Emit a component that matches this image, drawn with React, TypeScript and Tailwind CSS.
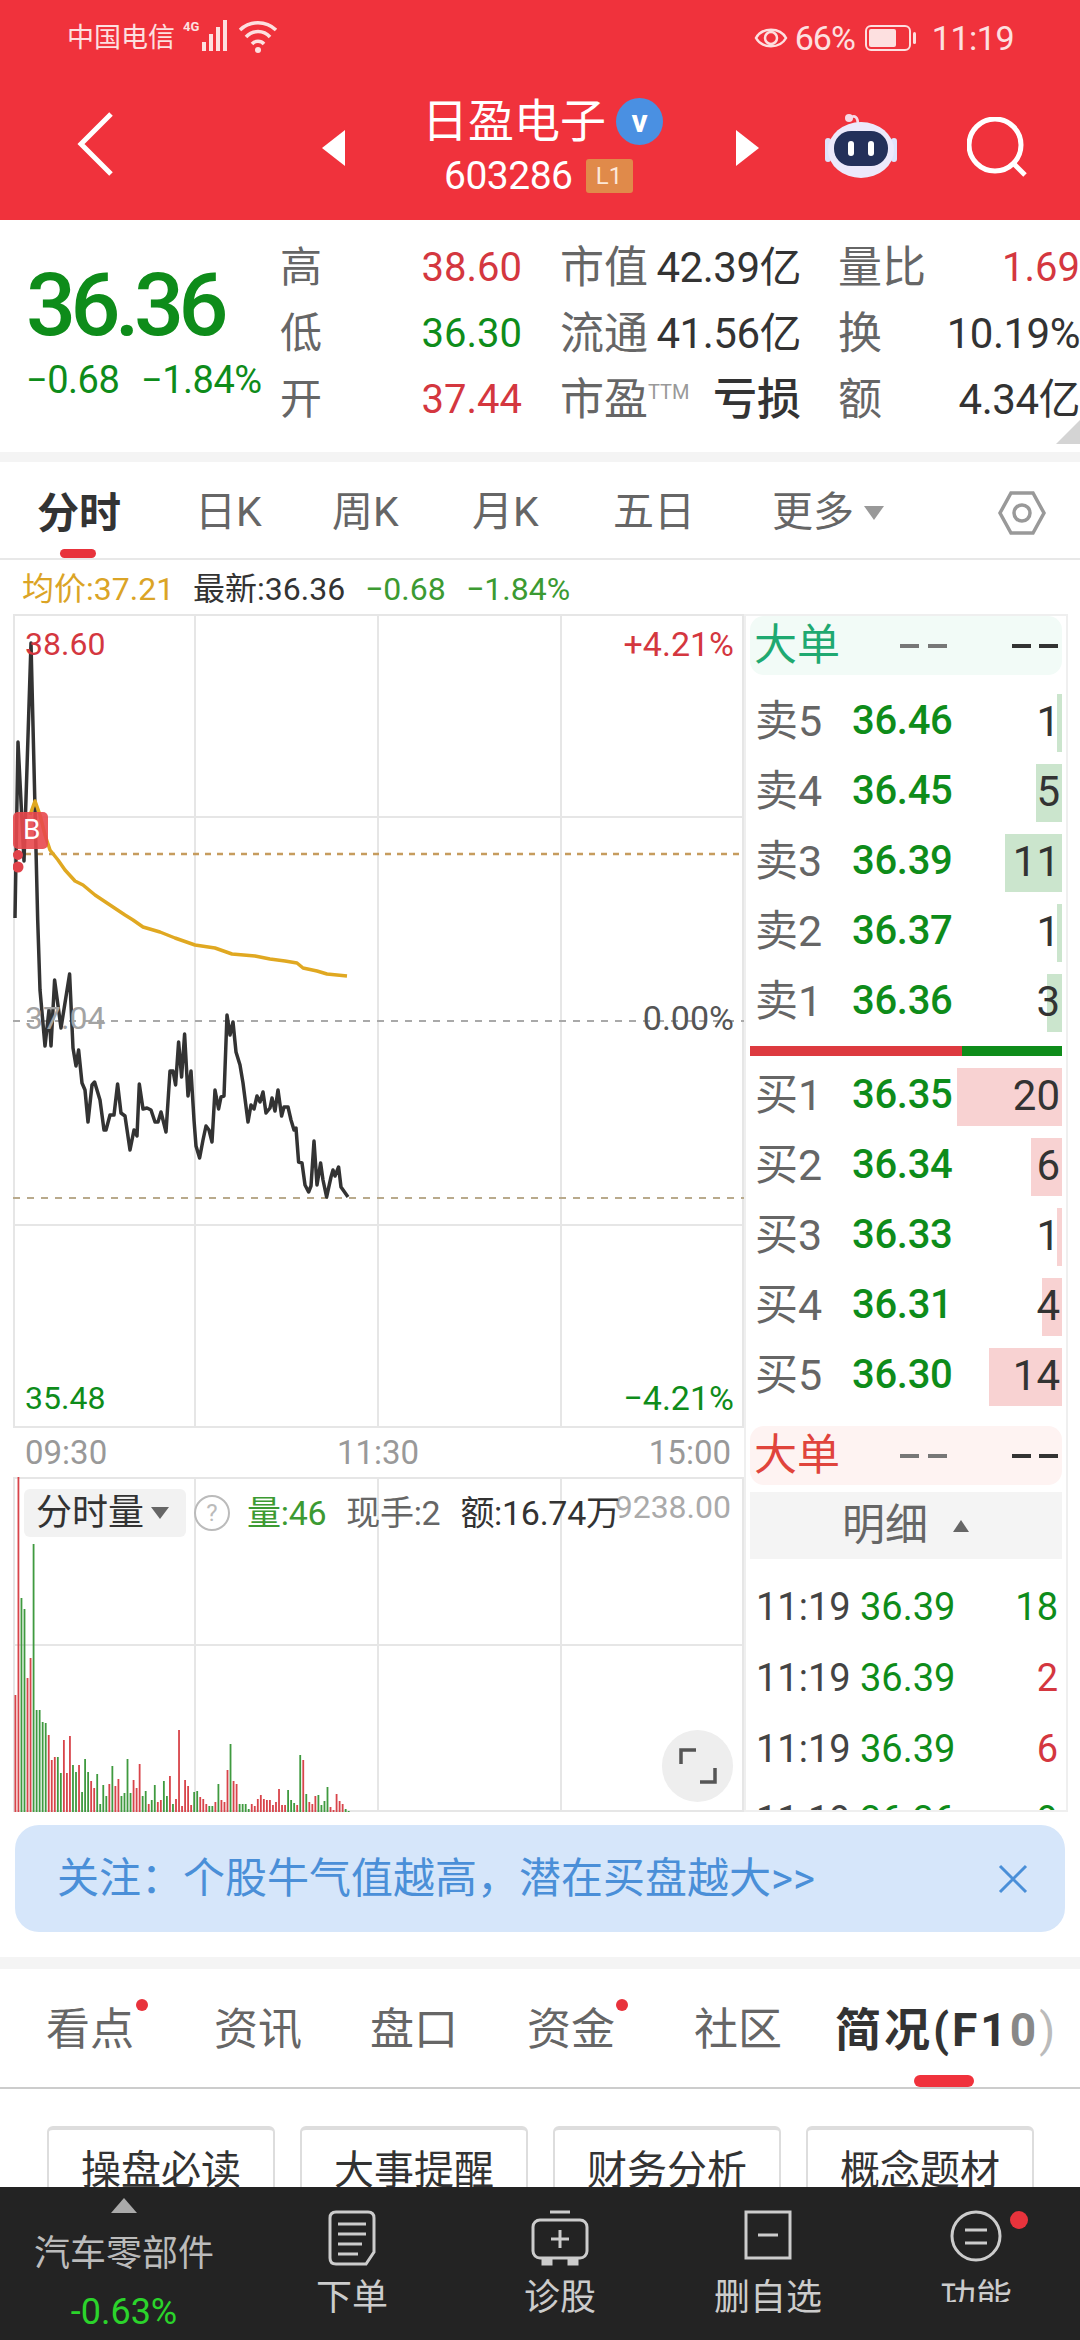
const red = '#d4373f';

// 盘口 rows: width of the volume bar in px
const sells = [
  { label: '卖5', price: '36.46', qty: '1', bar: 5 },
  { label: '卖4', price: '36.45', qty: '5', bar: 26 },
  { label: '卖3', price: '36.39', qty: '11', bar: 57 },
  { label: '卖2', price: '36.37', qty: '1', bar: 5 },
  { label: '卖1', price: '36.36', qty: '3', bar: 15 },
];
const buys = [
  { label: '买1', price: '36.35', qty: '20', bar: 105 },
  { label: '买2', price: '36.34', qty: '6', bar: 31 },
  { label: '买3', price: '36.33', qty: '1', bar: 5 },
  { label: '买4', price: '36.31', qty: '4', bar: 20 },
  { label: '买5', price: '36.30', qty: '14', bar: 73 },
];

const pricePts =
  '15,918 18,742 24,861 31,643 37.7,920 40,990 45,1046 49,1010 51,1046 54.6,980 61,1028 69.6,974 73,1048 76,1066 78.6,1050 82,1083 85,1090 88,1122 92,1085 94.6,1082 100,1100 104,1130 106,1130 110,1115 114,1115 117.6,1084 121,1113 125,1116 130,1150 134,1130 137,1136 139.3,1084 143,1109 147,1108 151,1110 155,1122 158,1122 161,1112 166,1132 170,1071 173,1071 175.6,1085 178.6,1042 181.6,1077 184.6,1034 188,1096 191,1071 194,1120 196,1146 199.6,1158 203,1140 206,1126 209,1130 212,1142 215,1090 218.6,1109 221,1097 224,1096 227,1015 230,1035 233,1022 236,1052 240,1065 243,1083 248,1122 251,1105 254,1109 257,1096 260,1102 263,1092 266,1113 270,1108 272,1098 275,1111 278,1090 281.6,1116 284,1107 288,1107 291,1120 294,1130 296,1128 298.6,1162 302,1163 305,1185 308.6,1192 311,1186 314,1141 317,1185 320.6,1163 323,1180 326.6,1197 331,1177 333,1170 335,1176 338.6,1167 341,1187 348,1197';
const avgPts =
  '30,815 35,801 40,815 45,835 50,850 58,860 65,870 75,881 83,885 95,895 110,905 125,915 133,920 143,927 160,932 175,938 195,945 215,948 232,954 255,956 270,959 285,961 297,963 303,968 317,971 327,974 347,976';

// volume bars, [height, up]
const vols: [number, number][] = [
  [117, 1], [335, 1], [214, 0], [203, 0], [134, 1], [154, 1], [268, 0], [102, 0], [102, 0], [90, 0], [89, 0], [77, 1],
  [52, 1], [55, 1], [55, 0], [39, 0], [72, 1], [39, 1], [76, 1], [47, 0], [40, 0], [47, 1], [20, 0], [53, 0],
  [40, 0], [31, 1], [24, 1], [38, 0], [8, 0], [27, 0], [16, 0], [28, 1], [46, 0], [26, 1], [33, 1], [16, 0],
  [19, 0], [53, 0], [19, 0], [32, 1], [24, 1], [48, 1], [16, 0], [21, 0], [8, 1], [12, 0], [27, 0], [10, 1],
  [12, 1], [31, 0], [16, 0], [36, 1], [8, 0], [13, 1], [82, 1], [6, 1], [32, 1], [26, 1], [7, 1], [20, 0],
  [21, 0], [15, 1], [13, 1], [8, 1], [6, 0], [6, 0], [10, 1], [28, 0], [12, 1], [10, 1], [42, 1], [68, 0],
  [31, 1], [28, 1], [8, 0], [8, 0], [8, 0], [3, 0], [8, 1], [6, 1], [13, 1], [17, 1], [13, 1], [12, 1],
  [12, 1], [7, 1], [10, 1], [23, 1], [7, 1], [7, 1], [22, 0], [12, 0], [9, 0], [7, 1], [57, 0], [52, 1],
  [18, 0], [10, 1], [8, 1], [16, 1], [17, 0], [7, 0], [11, 0], [25, 0], [5, 1], [2, 1], [18, 1], [11, 1],
  [8, 1], [3, 0], [1, 0],
];

function BookRow({ row, barColor }: { row: (typeof sells)[number]; barColor: string }) {
  return (
    <div className="relative flex h-[58px] shrink-0 items-center pb-[4px] pl-[5px] pr-[2px]">
      <div className="absolute right-0 top-0 h-full" style={{ width: row.bar, background: barColor }} />
      <span className="relative w-[97px] text-[43px] text-[#666]">{row.label}</span>
      <span className="relative text-[40px] font-medium tracking-[-0.3px] text-[#0e8c1a]">{row.price}</span>
      <span className="relative ml-auto text-[42px] text-[#333]">{row.qty}</span>
    </div>
  );
}

function BigOrder({ bg, color }: { bg: string; color: string }) {
  return (
    <div className={`flex h-[59px] shrink-0 items-center rounded-[14px] pl-[4px] pr-[4px] ${bg}`}>
      <span className={`text-[43px] leading-none ${color}`}>大单</span>
      <span className="ml-auto mr-[65px] h-[4px] w-[47px] border-x-[19px] border-y-0 border-[#777]" />
      <span className="h-[4px] w-[46px] border-x-[19px] border-y-0 border-[#333]" />
    </div>
  );
}

function TradeRow({ price, qty, color }: { price: string; qty: string; color: string }) {
  return (
    <div className="flex h-[71px] shrink-0 items-center pb-[2px] pl-[6px] pr-[4px] text-[38px]">
      <span className="w-[104px] text-[#444]">11:19</span>
      <span className="text-[#0e8c1a]">{price}</span>
      <span className={`ml-auto ${color}`}>{qty}</span>
    </div>
  );
}

function Triangle({ dir }: { dir: 'left' | 'right' }) {
  return (
    <svg width="24" height="36" viewBox="0 0 24 36">
      <path d={dir === 'left' ? 'M23 0V36L0 18Z' : 'M1 0V36L24 18Z'} fill="#fff" />
    </svg>
  );
}

function Robot() {
  return (
    <svg width="72" height="66" viewBox="0 0 72 66">
      <path d="M25 6c5-4 8 0 8 6" fill="none" stroke="#f6d9e6" strokeWidth="2.5" />
      <circle cx="24" cy="6" r="4" fill="#f6d9e6" />
      <rect x="0" y="26" width="6" height="24" rx="3" fill="#dfe3fb" />
      <rect x="66" y="26" width="6" height="24" rx="3" fill="#dfe3fb" />
      <ellipse cx="36" cy="38" rx="33" ry="28" fill="#ece9fb" />
      <rect x="9" y="19" width="54" height="35" rx="17" fill="#23305a" />
      <rect x="23" y="29" width="6" height="15" rx="3" fill="#fff" />
      <rect x="43" y="29" width="6" height="15" rx="3" fill="#fff" />
    </svg>
  );
}

function Chart() {
  return (
    <div className="relative h-[814px]">
      <svg width="731" height="814" viewBox="13 614 731 814" className="block">
        <g stroke="#e6e6e6" strokeWidth="2" fill="none">
          <rect x="14" y="615" width="729" height="812" />
          <path d="M195 614V1428M378 614V1428M561 614V1428M13 817H744M13 1225H744" />
        </g>
        <path d="M13 1021H744" stroke="#a9a9a9" strokeWidth="2" strokeDasharray="7 7" />
        <path d="M13 854H744" stroke="#c69c5e" strokeWidth="2.5" strokeDasharray="6 6" />
        <path d="M13 1198H744" stroke="#b9aa8c" strokeWidth="2" strokeDasharray="7 7" />
        <polyline points={pricePts} fill="none" stroke="#333" strokeWidth="3.5" strokeLinejoin="round" />
        <polyline points={avgPts} fill="none" stroke="#e0a821" strokeWidth="3.5" strokeLinejoin="round" />
        <circle cx="18" cy="855" r="5" fill="#e0424a" />
        <circle cx="18" cy="867" r="5.5" fill="#e0424a" />
        <rect x="13" y="812" width="35" height="37" rx="5" fill="#e8484c" fillOpacity="0.9" />
      </svg>
      <span className="absolute left-[10px] top-[202px] text-[28px] leading-none text-white">B</span>
      <span className="absolute left-[12px] top-[12px] text-[32px] leading-[36px]" style={{ color: red }}>38.60</span>
      <span className="absolute right-[10px] top-[12px] text-[34px] leading-[36px]" style={{ color: red }}>+4.21%</span>
      <span className="absolute left-[12px] top-[386px] text-[32px] leading-[36px] text-[#a3a3a3]">37.04</span>
      <span className="absolute right-[10px] top-[386px] text-[34px] leading-[36px] text-[#555]">0.00%</span>
      <span className="absolute left-[12px] top-[766px] text-[32px] leading-[36px] text-[#0e8c1a]">35.48</span>
      <span className="absolute right-[10px] top-[766px] text-[34px] leading-[36px] text-[#0e8c1a]">−4.21%</span>
    </div>
  );
}

function VolumeChart() {
  return (
    <div className="relative h-[335px]">
      <svg width="731" height="335" viewBox="13 1477 731 335" className="block">
        <g stroke="#e6e6e6" strokeWidth="2" fill="none">
          <path d="M14 1477V1812M195 1477V1812M378 1477V1812M561 1477V1812M743 1477V1812M13 1478H744M13 1645H744M13 1811H744" />
        </g>
        {vols.map(([h, up], i) => (
          <rect
            key={i}
            x={14.5 + i * 3.03}
            y={1812 - h}
            width="1.8"
            height={h}
            fill={up ? '#d8444a' : '#3f9a3f'}
          />
        ))}
      </svg>
      <div className="absolute left-[11px] top-[12px] flex h-[48px] w-[162px] items-center rounded-[6px] bg-[#f2f2f2] pl-[12px] text-[36px] text-[#333]">
        分时量
        <svg width="20" height="14" viewBox="0 0 20 14" className="ml-[6px]">
          <path d="M1 1H19L10 13Z" fill="#666" />
        </svg>
      </div>
      <div className="absolute left-[181px] top-[18px] flex h-[36px] w-[36px] items-center justify-center rounded-full border-[2px] border-[#bbb] text-[24px] leading-none text-[#bbb]">
        ?
      </div>
      <span className="absolute right-[13px] top-[10px] text-[32px] leading-[40px] text-[#aaa]">9238.00</span>
      <div className="absolute left-[234px] top-[16px] flex gap-[20px] text-[34px] leading-[40px] tracking-[-0.3px]">
        <span className="text-[#3c9a32]">量:46</span>
        <span className="text-[#666]">现手:2</span>
        <span className="text-[#333]">额:16.74万</span>
      </div>
      <div className="absolute left-[649px] top-[253px] flex h-[72px] w-[71px] items-center justify-center rounded-full bg-[#eee]">
        <svg width="38" height="38" viewBox="0 0 38 38" fill="none" stroke="#555" strokeWidth="3.5">
          <path d="M2 17V3H17M36 21V35H21" />
        </svg>
      </div>
    </div>
  );
}

const toolCell = 'relative flex w-[208px] flex-col items-center pt-[23px]';

export default function App() {
  return (
    <div className="flex h-[2340px] w-[1080px] flex-col overflow-hidden bg-white font-[Roboto,'Noto_Sans_CJK_SC',sans-serif]">
      {/* red header */}
      <div className="h-[220px] shrink-0 bg-[#f0323c] text-white">
        <div className="flex h-[76px] items-center pl-[67px] pr-[66px] text-[#fde0e0]">
          <span className="text-[27px]">中国电信</span>
          <svg width="96" height="40" viewBox="0 0 96 40" className="ml-[8px]" fill="#fde0e0">
            <text x="0" y="13" fontSize="13" fontWeight="700">4G</text>
            <rect x="19" y="24" width="4" height="9" />
            <rect x="26" y="16" width="4" height="17" />
            <rect x="33" y="9" width="4" height="24" />
            <rect x="40" y="2" width="4" height="31" />
            <path d="M57 12a26 26 0 0 1 36 0M63 19a16 16 0 0 1 24 0M69 26a8 8 0 0 1 12 0" fill="none" stroke="#fde0e0" strokeWidth="3.5" />
            <circle cx="75" cy="32" r="3" />
          </svg>
          <svg width="34" height="28" viewBox="0 0 34 28" className="ml-auto" fill="none" stroke="#fde0e0" strokeWidth="2.5">
            <path d="M2 14C8 3 26 3 32 14C26 25 8 25 2 14Z" />
            <circle cx="17" cy="14" r="6" />
          </svg>
          <span className="ml-[7px] text-[34px] tracking-[-1px]">66%</span>
          <svg width="52" height="28" viewBox="0 0 52 28" className="ml-[10px]">
            <rect x="1" y="2" width="44" height="24" rx="5" fill="none" stroke="#fde0e0" strokeWidth="2" />
            <rect x="4" y="5" width="27" height="18" rx="2" fill="#fde0e0" />
            <rect x="48" y="8" width="3" height="12" rx="1.5" fill="#fde0e0" />
          </svg>
          <span className="ml-[15px] text-[34px] tracking-[-0.5px]">11:19</span>
        </div>
        <div className="flex h-[144px] items-start">
          <svg width="36" height="64" viewBox="0 0 36 64" className="ml-[77px] mt-[36px]" fill="none" stroke="#fff" strokeWidth="5">
            <path d="M34 2L4 32L34 62" />
          </svg>
          <div className="ml-[209px] mt-[54px]">
            <Triangle dir="left" />
          </div>
          <div className="ml-[76px] flex w-[241px] flex-col">
            <div className="mt-[15px] flex h-[60px] items-center">
              <span className="text-[46px] leading-none">日盈电子</span>
              <span className="ml-[10px] flex h-[47px] w-[47px] items-center justify-center rounded-full bg-[#4a90e2] text-[32px] font-bold leading-none text-white">
                v
              </span>
            </div>
            <div className="mt-[5px] flex h-[40px] items-center pl-[22px]">
              <span className="text-[39px] leading-none tracking-[-0.5px]">603286</span>
              <span className="ml-[13px] flex h-[34px] w-[47px] items-center justify-center rounded-[3px] bg-[#e08a4a] text-[24px] leading-none text-[#fde8d8]">
                L1
              </span>
            </div>
          </div>
          <div className="ml-[72px] mt-[54px]">
            <Triangle dir="right" />
          </div>
          <div className="ml-[66px] mt-[36px]">
            <Robot />
          </div>
          <svg width="60" height="60" viewBox="0 0 60 60" className="ml-[70px] mt-[41px]" fill="none" stroke="#fff" strokeWidth="5">
            <circle cx="28" cy="28" r="26" />
            <path d="M47 47L58 58" />
          </svg>
        </div>
      </div>

      {/* quote */}
      <div className="relative flex h-[232px] shrink-0 pt-[15px]">
        <div className="w-[280px] pl-[26px]">
          <div className="mt-[20px] h-[90px] text-[88px] font-medium leading-[100px] tracking-[-5.5px] text-[#0e8c1a]">36.36</div>
          <div className="mt-[15px] flex text-[38px] leading-[40px] tracking-[-0.5px] text-[#0e8c1a]">
            <span className="w-[115px]">−0.68</span>
            <span>−1.84%</span>
          </div>
        </div>
        <div className="flex w-[242px] flex-col text-[40px] leading-[66px]">
          <div className="flex h-[66px] justify-between"><span className="text-[42px] text-[#666]">高</span><span style={{ color: red }}>38.60</span></div>
          <div className="flex h-[66px] justify-between"><span className="text-[42px] text-[#666]">低</span><span className="text-[#0e8c1a]">36.30</span></div>
          <div className="flex h-[66px] justify-between"><span className="text-[42px] text-[#666]">开</span><span style={{ color: red }}>37.44</span></div>
        </div>
        <div className="ml-[38px] flex w-[241px] flex-col text-[#333] leading-[66px]">
          <div className="flex h-[66px] justify-between text-[42px]"><span className="text-[44px] text-[#666]">市值</span><span className="tracking-[-0.5px]">42.39亿</span></div>
          <div className="flex h-[66px] justify-between text-[42px]"><span className="text-[44px] text-[#666]">流通</span><span className="tracking-[-0.5px]">41.56亿</span></div>
          <div className="flex h-[66px] justify-between">
            <span className="flex items-start text-[44px] text-[#666]">市盈<span className="mt-[-8px] text-[20px] text-[#999]">TTM</span></span>
            <span className="text-[44px] font-medium">亏损</span>
          </div>
        </div>
        <div className="ml-[37px] flex w-[242px] flex-col leading-[66px]">
          <div className="flex h-[66px] justify-between text-[40px]"><span className="text-[44px] text-[#666]">量比</span><span style={{ color: red }}>1.69</span></div>
          <div className="flex h-[66px] justify-between text-[42px]"><span className="text-[44px] text-[#666]">换</span><span className="tracking-[-0.5px] text-[#333]">10.19%</span></div>
          <div className="flex h-[66px] justify-between text-[42px]"><span className="text-[44px] text-[#666]">额</span><span className="tracking-[-0.5px] text-[#333]">4.34亿</span></div>
        </div>
        <svg width="24" height="24" viewBox="0 0 24 24" className="absolute bottom-[8px] right-0">
          <path d="M24 0V24H0Z" fill="#d4d4d4" />
        </svg>
      </div>
      <div className="h-[10px] shrink-0 bg-[#f4f4f4]" />

      {/* period tabs */}
      <div className="relative flex h-[98px] shrink-0 items-center border-b-2 border-[#e8e8e8] pt-[6px] pl-[37px] text-[41px] text-[#666]">
        <span className="w-[158px] text-[42px] font-bold text-[#333]">分时</span>
        <span className="w-[137px]">日K</span>
        <span className="w-[140px]">周K</span>
        <span className="w-[141px]">月K</span>
        <span className="w-[159px]">五日</span>
        <span>更多</span>
        <svg width="22" height="16" viewBox="0 0 22 16" className="ml-[9px]">
          <path d="M1 1H21L11 15Z" fill="#999" />
        </svg>
        <svg width="50" height="50" viewBox="0 0 50 50" className="ml-[112px]" fill="none" stroke="#999" strokeWidth="3.5">
          <path d="M14 5H36L47 25L36 45H14L3 25Z" />
          <circle cx="25" cy="25" r="8" />
        </svg>
        <div className="absolute bottom-0 left-[60px] h-[9px] w-[36px] rounded-full bg-[#e8333c]" />
      </div>

      {/* info row */}
      <div className="flex h-[54px] shrink-0 items-center pl-[22px] pt-[3px] text-[32px] leading-none">
        <span className="w-[171px] text-[#dba426]">均价:37.21</span>
        <span className="w-[172px] text-[#333]">最新:36.36</span>
        <span className="w-[101px] text-[#3c9a32]">−0.68</span>
        <span className="text-[#3c9a32]">−1.84%</span>
      </div>

      {/* chart + order book */}
      <div className="flex h-[1198px] shrink-0">
        <div className="w-[744px] shrink-0 pl-[13px]">
          <Chart />
          <div className="flex h-[49px] items-center justify-between pl-[12px] pr-[13px] text-[33px] text-[#999]">
            <span>09:30</span>
            <span>11:30</span>
            <span>15:00</span>
          </div>
          <VolumeChart />
        </div>
        <div className="flex h-[1198px] w-[324px] shrink-0 flex-col overflow-hidden border-x-2 border-y-2 border-[#efefef] px-[4px]">
          <BigOrder bg="bg-[#f2fbf7]" color="text-[#1fa971]" />
          <div className="mt-[19px] flex shrink-0 flex-col gap-[12px]">
            {sells.map((r) => (
              <BookRow key={r.label} row={r} barColor="#cbe5cd" />
            ))}
          </div>
          <div className="mt-[14px] flex h-[10px] shrink-0">
            <div className="w-[212px] bg-[#dd3a3f]" />
            <div className="flex-1 bg-[#0e8c1a]" />
          </div>
          <div className="mt-[12px] flex shrink-0 flex-col gap-[12px]">
            {buys.map((r) => (
              <BookRow key={r.label} row={r} barColor="#f8d2d2" />
            ))}
          </div>
          <div className="mt-[20px] shrink-0">
            <BigOrder bg="bg-[#fef3f2]" color="text-[#e0443c]" />
          </div>
          <div className="mt-[7px] flex h-[67px] shrink-0 items-center justify-center bg-[#f4f4f4] text-[43px] text-[#666]">
            明细
            <svg width="18" height="14" viewBox="0 0 18 14" className="ml-[24px]">
              <path d="M9 1L17 13H1Z" fill="#666" />
            </svg>
          </div>
          <div className="mt-[14px] flex shrink-0 flex-col">
            <TradeRow price="36.39" qty="18" color="text-[#0e8c1a]" />
            <TradeRow price="36.39" qty="2" color="text-[#d4373f]" />
            <TradeRow price="36.39" qty="6" color="text-[#d4373f]" />
            <TradeRow price="36.36" qty="9" color="text-[#0e8c1a]" />
          </div>
        </div>
      </div>

      {/* lower part, runs under the bottom bar */}
      <div className="min-h-0 flex-1 overflow-hidden">
        <div className="mx-[15px] mt-[13px] flex h-[107px] items-center rounded-[24px] bg-[#d6e6fa] pl-[42px] pr-[37px] text-[42px] text-[#4a8fd8]">
          <span>{'关注\uFF1A个股牛气值越高\uFF0C潜在买盘越大>>'}</span>
          <svg width="30" height="30" viewBox="0 0 30 30" className="ml-auto" fill="none" stroke="#4a8fd8" strokeWidth="3">
            <path d="M2 2L28 28M28 2L2 28" />
          </svg>
        </div>
        <div className="mt-[25px] h-[12px] bg-[#f4f4f4]" />
        <div className="relative flex h-[120px] items-center border-b-2 border-[#ccc] pl-[46px] pt-[4px] text-[44px] text-[#666]">
          <span className="relative w-[168px]">
            看点
            <span className="absolute left-[90px] top-[2px] h-[12px] w-[12px] rounded-full bg-[#e8333c]" />
          </span>
          <span className="w-[156px]">资讯</span>
          <span className="w-[157px]">盘口</span>
          <span className="relative w-[167px]">
            资金
            <span className="absolute left-[89px] top-[2px] h-[12px] w-[12px] rounded-full bg-[#e8333c]" />
          </span>
          <span className="w-[141px]">社区</span>
          <span className="text-[46px] font-bold tracking-[3px] text-[#333]">
            简况(F1<span className="text-[#888]">0</span><span className="font-normal text-[#bbb]">)</span>
          </span>
          <div className="absolute bottom-0 left-[914px] h-[12px] w-[60px] rounded-full bg-[#f0323c]" />
        </div>
        <div className="ml-[47px] mt-[37px] flex gap-[25px]">
          {['操盘必读', '大事提醒', '财务分析', '概念题材'].map((t) => (
            <div key={t} className="flex h-[88px] w-[228px] items-center justify-center rounded-[6px] border-2 border-t-4 border-[#ddd] text-[40px] text-[#333]">
              {t}
            </div>
          ))}
        </div>
      </div>

      {/* bottom bar */}
      <div className="flex h-[153px] shrink-0 bg-[#232323] text-[36px] leading-none text-[#ccc]">
        <div className="flex w-[248px] flex-col items-center pt-[11px]">
          <svg width="26" height="15" viewBox="0 0 26 15">
            <path d="M13 0L26 15H0Z" fill="#aaa" />
          </svg>
          <span className="mt-[19px] text-[36px] leading-[44px] text-[#bbb]">汽车零部件</span>
          <span className="mt-[16px] text-[36px] leading-[40px] text-[#2bd42b]">-0.63%</span>
        </div>
        <div className={toolCell}>
          <svg width="48" height="56" viewBox="0 0 48 56" fill="none" stroke="#ccc" strokeWidth="3">
            <path d="M8 2H40Q46 2 46 8V42L38 54H8Q2 54 2 48V8Q2 2 8 2Z" />
            <path d="M10 14H38M10 24H38M10 34H34M10 44H30" />
          </svg>
          <span className="mt-[12px] leading-[40px]">下单</span>
        </div>
        <div className={toolCell}>
          <svg width="58" height="56" viewBox="0 0 58 56" fill="none" stroke="#ccc" strokeWidth="3">
            <path d="M19 2H39" />
            <rect x="2" y="10" width="54" height="38" rx="7" />
            <path d="M29 20V38M20 29H38" />
            <path d="M12 48V54H20V48M38 48V54H46V48" fill="#ccc" />
          </svg>
          <span className="mt-[12px] leading-[40px]">诊股</span>
        </div>
        <div className={toolCell}>
          <svg width="48" height="50" viewBox="0 0 48 50" fill="none" stroke="#ccc" strokeWidth="3">
            <rect x="2" y="2" width="44" height="46" />
            <path d="M14 25H34" />
          </svg>
          <span className="mt-[18px] leading-[40px]">删自选</span>
        </div>
        <div className={toolCell}>
          <svg width="52" height="52" viewBox="0 0 52 52" fill="none" stroke="#ccc" strokeWidth="3">
            <circle cx="26" cy="26" r="24" />
            <path d="M15 20H37M15 33H37" />
          </svg>
          <div className="mt-[16px] h-[24px] overflow-hidden leading-[40px]">功能</div>
          <span className="absolute left-[138px] top-[24px] h-[18px] w-[18px] rounded-full bg-[#e8333c]" />
        </div>
      </div>
    </div>
  );
}
